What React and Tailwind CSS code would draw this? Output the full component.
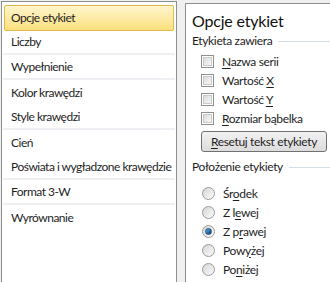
const navItems = [
  { label: "Opcje etykiet", active: true },
  { label: "Liczby", sep: true },
  { label: "Wypełnienie", sep: true },
  { label: "Kolor krawędzi" },
  { label: "Style krawędzi", sep: true },
  { label: "Cień" },
  { label: "Poświata i wygładzone krawędzie", sep: true },
  { label: "Format 3-W", sep: true },
  { label: "Wyrównanie" },
];

const Key = ({ children }) => <span className="underline underline-offset-2">{children}</span>;

const checks = [
  [<Key key="n">N</Key>, "azwa serii"],
  ["Wartość ", <Key key="x">X</Key>],
  ["Wartość ", <Key key="y">Y</Key>],
  [<Key key="r">R</Key>, "ozmiar bąbelka"],
];

const radios = [
  { parts: ["Śr", <Key key="o">o</Key>, "dek"] },
  { parts: ["Z l", <Key key="e">e</Key>, "wej"] },
  { parts: ["Z p", <Key key="r">r</Key>, "awej"], checked: true },
  { parts: ["Pow", <Key key="y">y</Key>, "żej"] },
  { parts: ["Po", <Key key="n">n</Key>, "iżej"] },
];

const Checkbox = () => (
  <span className="w-[13px] h-[13px] border border-[#8e8f8f] bg-white p-[1px] flex-none">
    <span className="block w-full h-full bg-gradient-to-br from-[#dcdcdc] to-[#f6f6f6] border border-[#c9c9c9]" />
  </span>
);

const Radio = ({ checked }) => (
  <span className="w-[13px] h-[13px] rounded-full border border-[#9a9a9a] bg-gradient-to-br from-[#d6d6d6] to-[#fbfbfb] flex items-center justify-center flex-none">
    {checked && (
      <span className="w-[7px] h-[7px] rounded-full bg-gradient-to-br from-[#5fb4e8] to-[#0b3c6b] border border-[#1c5180]" />
    )}
  </span>
);

const GroupTitle = ({ children }) => (
  <div className="flex items-center gap-[6px] h-[18px]">
    <span>{children}</span>
    <span className="flex-1 h-px bg-[#d5dfe5]" />
  </div>
);

export default function App() {
  return (
    <div
      className="w-[330px] h-[282px] bg-[#f0f0f0] flex overflow-hidden text-[12px] tracking-[-0.35px] text-[#1e1e1e] whitespace-nowrap"
      style={{ fontFamily: 'Lato, "Noto Sans", sans-serif' }}
    >
      {/* left nav */}
      <div className="ml-[1px] mt-[1px] w-[176px] h-[290px] border border-[#8e8f8f] bg-white px-[1px] pt-[3px] flex-none tracking-[-0.5px]">
        {navItems.map((item) => (
          <div
            key={item.label}
            className={
              item.active
                ? "h-[26px] mx-[1px] mb-[-1px] flex items-center pl-[6px] rounded-[2px] border border-[#e3b84a] bg-gradient-to-b from-[#fef5cc] to-[#fcdf7c]"
                : "h-[25px] flex items-center pl-[8px] " + (item.sep ? "border-b-2 border-[#efeff3]" : "")
            }
          >
            {item.label}
          </div>
        ))}
      </div>

      {/* right panel */}
      <div className="ml-[8px] mt-[3px] flex-1 h-[290px] border-l border-t border-[#8e8f8f] bg-white pl-[6px] pt-[6px]">
        <div className="text-[16px] leading-[22px] tracking-[-0.2px] text-[#111]">Opcje etykiet</div>
        <GroupTitle>Etykieta zawiera</GroupTitle>
        <div className="pl-[9px] pt-[2px]">
          {checks.map((parts, i) => (
            <div key={i} className="h-[19px] flex items-center gap-[8px]">
              <Checkbox />
              <span>{parts}</span>
            </div>
          ))}
        </div>
        <div className="pl-[9px] pt-[3px] pr-[3px]">
          <button className="w-full h-[21px] border border-[#707070] rounded-[3px] bg-gradient-to-b from-[#f2f2f2] to-[#dcdcdc] leading-none">
            <Key>R</Key>esetuj tekst etykiety
          </button>
        </div>
        <div className="pt-[6px]">
          <GroupTitle>Położenie etykiety</GroupTitle>
        </div>
        <div className="pl-[10px] pt-[8px]">
          {radios.map((r, i) => (
            <div key={i} className="h-[19px] flex items-center gap-[8px]">
              <Radio checked={r.checked} />
              <span>{r.parts}</span>
            </div>
          ))}
        </div>
      </div>
    </div>
  );
}
